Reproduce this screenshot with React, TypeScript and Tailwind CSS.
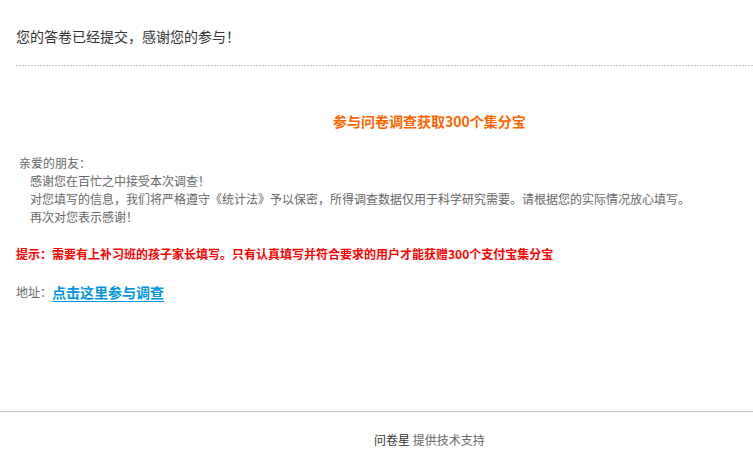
import React from 'react'

const font = "font-['Microsoft_YaHei','Noto_Sans_CJK_SC',sans-serif]"

const bodyLines = [
  '感谢您在百忙之中接受本次调查！',
  '对您填写的信息，我们将严格遵守《统计法》予以保密，所得调查数据仅用于科学研究需要。请根据您的实际情况放心填写。',
  '再次对您表示感谢！',
]

const App: React.FC = () => {
  return (
    <div className={`${font} w-[753px] h-[463px] bg-white overflow-hidden flex flex-col`}>
      {/* header */}
      <div className="pl-4">
        <div className="pt-[27px] h-[65px] text-[14px] leading-[18px] text-[#333]">
          您的答卷已经提交，感谢您的参与！
        </div>
        <div className="h-px bg-[repeating-linear-gradient(to_right,#c6c6c6_0_2px,transparent_2px_3px)]" />
      </div>

      <div className="pl-4">
        <div className="mt-[45px] pl-[317px] text-[14px] leading-[20px] font-bold text-[#ff6600] whitespace-nowrap">
          参与问卷调查获取300个集分宝
        </div>

        <div className="mt-[23px] text-[12px] leading-[18px] text-[#666]">
          <div className="pl-[3px]">亲爱的朋友：</div>
          {bodyLines.map((line) => (
            <div key={line} className="pl-[14px] whitespace-nowrap">
              {line}
            </div>
          ))}
        </div>

        <div className="mt-[19px] text-[12px] leading-[18px] font-bold text-[#ff0000] whitespace-nowrap">
          提示：需要有上补习班的孩子家长填写。只有认真填写并符合要求的用户才能获赠300个支付宝集分宝
        </div>

        <div className="mt-[19px] h-[20px] flex items-center text-[#666]">
          <span className="text-[12px] leading-[20px]">地址：</span>
          <a href="#" className="text-[14px] leading-[20px] font-bold text-[#0095e0] underline underline-offset-[3px]">
            点击这里参与调查
          </a>
        </div>
      </div>

      <div className="mt-[109px] border-t border-[#c4c4c4] pt-[19px]">
        <div className="pl-[374px] text-[12px] leading-[18px] whitespace-nowrap">
          <span className="text-[#333]">问卷星</span>
          <span className="text-[#666]"> 提供技术支持</span>
        </div>
      </div>
    </div>
  )
}

export default App
